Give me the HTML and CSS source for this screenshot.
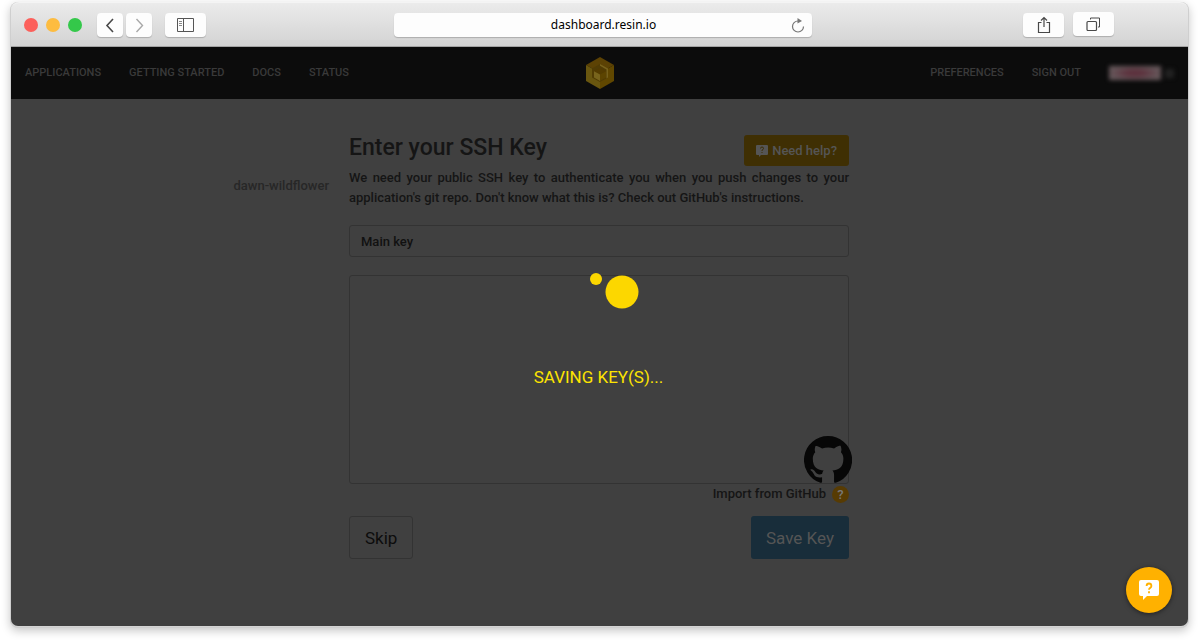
FILE: index.html
```
<!DOCTYPE html>
<html lang="en">
<head>
<meta charset="utf-8">
<title>dashboard.resin.io</title>
<link rel="stylesheet" href="styles.css">
</head>
<body>
<div class="window">
  <div class="toolbar">
    <div class="toolbar-left">
      <div class="lights"><span class="light red"></span><span class="light amber"></span><span class="light green"></span></div>
      <div class="history">
        <button class="tool narrow" aria-label="Back"><svg width="26" height="24" viewBox="0 0 26 24"><path d="M16 6l-6 6.500 6 6.500" fill="none" stroke="#484848" stroke-width="1.600"/></svg></button>
        <button class="tool narrow" aria-label="Forward"><svg width="26" height="24" viewBox="0 0 26 24"><path d="M10.500 6l6 6.500-6 6.500" fill="none" stroke="#a8a8a8" stroke-width="1.400"/></svg></button>
      </div>
      <button class="tool" aria-label="Show sidebar"><svg width="19" height="14" viewBox="0 0 19 14"><path d="M1.500 .5h16v13h-16zM7.500 .5v13" fill="none" stroke="#555"/><path d="M3 3.500h3M3 5.500h3M3 7.500h3" stroke="#888"/></svg></button>
    </div>
    <div class="address">
      <input class="url" type="text" aria-label="Address" value="dashboard.resin.io">
      <button class="reload" aria-label="Reload"><svg width="14" height="15" viewBox="0 0 14 15"><path d="M7 3a5.500 5.500 0 1 0 5.500 5.500" fill="none" stroke="#777" stroke-width="1.200"/><path d="M6.500 0v5.500L11 3z" fill="#777"/></svg></button>
    </div>
    <div class="toolbar-right">
      <button class="tool" aria-label="Share"><svg width="14" height="18" viewBox="0 0 14 18"><path d="M4.500 6.500h-3v10h11v-10h-3M7 11V1.500M4 4.500l3-3 3 3" fill="none" stroke="#484848" stroke-width="1.200"/></svg></button>
      <button class="tool raised" aria-label="Show tabs"><svg width="15" height="15" viewBox="0 0 15 15"><rect x="1" y="4.500" width="9.500" height="9" rx="1" fill="none" stroke="#484848" stroke-width="1.200"/><path d="M4.500 2.500v-1.500h9v9h-1.500" fill="none" stroke="#484848"/></svg></button>
    </div>
  </div>

  <div class="page">
    <header class="site-header">
      <nav class="links left">
        <a href="#">APPLICATIONS</a><a href="#">GETTING STARTED</a><a href="#">DOCS</a><a href="#">STATUS</a>
      </nav>
      <a class="logo" href="#" aria-label="Home"><svg width="30" height="32" viewBox="0 0 30 32">
        <path d="M15 0l14 8-14 8L1 8z" fill="#5c4204"/><path d="M1 8l14 8v16L1 24z" fill="#69560f"/><path d="M29 8l-14 8v16l14-8z" fill="#604700"/>
        <path d="M15 7l8 4.500v9L15 25l-8-4.500v-9z" fill="#513c04"/>
        <path d="M15 7l8 4.500v9l-1.500 .9v-9L15 8.700z" fill="#78621c"/>
        <path d="M15 11l6 3.300-6 3.300-6-3.300z" fill="#543c00"/><path d="M9 14.300l6 3.300v6.400l-6-3.400z" fill="#78641c"/><path d="M21 14.300l-6 3.300v6.400l6-3.400z" fill="#5c4400"/>
      </svg></a>
      <nav class="links right">
        <a href="#">PREFERENCES</a><a href="#">SIGN OUT</a>
        <span class="account"><span class="account-name"></span><span class="account-mark"></span></span>
      </nav>
    </header>

    <div class="content">
      <aside class="app-name">dawn-wildflower</aside>
      <main class="form">
        <div class="title-row">
          <h1>Enter your SSH Key</h1>
          <button class="help"><svg width="12" height="12" viewBox="0 0 12 12"><path d="M1 0h10q1 0 1 1v8q0 1-1 1H5l-2 2v-2H1q-1 0-1-1V1q0-1 1-1z" fill="#555"/><path d="M4.500 3.500q0-1.500 1.500-1.500t1.500 1.400Q7.500 4.500 6 5.200V6M6 7v1" fill="none" stroke="#3d2e06"/></svg>Need help?</button>
        </div>
        <p>We need your public SSH key to authenticate you when you push changes to your application's git repo. Don't know what this is? Check out GitHub's instructions.</p>
        <input class="field" type="text" aria-label="Key title" value="Main key">
        <div class="key-box">
          <textarea class="field area" aria-label="Public key"></textarea>
          <svg class="github" viewBox="0 0 16 16"><path d="M8 0a8 8 0 0 0-2.530 15.590c.4.070.550-.170.550-.380v-1.490c-2.010.370-2.530-.490-2.690-.940-.090-.230-.480-.940-.820-1.130-.280-.150-.680-.520-.010-.530.630-.010 1.080.580 1.230.820.720 1.210 1.870.870 2.330.660.070-.520.280-.870.510-1.070-1.780-.2-3.640-.890-3.640-3.950 0-.870.310-1.590.820-2.150-.080-.2-.360-1.020.080-2.120 0 0 .670-.210 2.200.820a7.400 7.400 0 0 1 4 0c1.530-1.040 2.200-.820 2.200-.820.440 1.100.160 1.920.080 2.120.510.560.820 1.270.820 2.150 0 3.070-1.870 3.750-3.650 3.950.290.250.540.730.540 1.480v2.200c0 .210.150.460.550.380A8 8 0 0 0 8 0z" fill="#070707"/></svg>
        </div>
        <div class="import"><span>Import from GitHub</span><button class="hint" aria-label="About importing">?</button></div>
        <div class="actions"><button class="skip">Skip</button><button class="save">Save Key</button></div>
      </main>
    </div>

    <div class="saving" role="status">
      <svg width="80" height="44" viewBox="0 0 80 44"><circle cx="37" cy="10" r="6" fill="#fcd700"/><circle cx="63" cy="23" r="16.500" fill="#fcd700"/></svg>
      <span>SAVING KEY(S)...</span>
    </div>
    <button class="chat" aria-label="Chat with us"><svg width="22" height="22" viewBox="0 0 22 22"><path d="M3 1h16q2 0 2 2v12q0 2-2 2H9l-4 4v-4H3q-2 0-2-2V3q0-2 2-2z" fill="#fff"/><path d="M8.600 7q0-2.500 2.400-2.500T13.400 7q0 1.200-1.200 1.900T11 10.800M11 12.300v2" fill="none" stroke="#ffb100" stroke-width="1.800"/></svg></button>
  </div>
</div>
</body>
</html>
```
FILE: styles.css
```
* { box-sizing: border-box; }
body {
  margin: 0;
  height: 100vh;
  padding: 2px 10px 16px;
  background: #fff;
  font-family: Roboto, "Liberation Sans", sans-serif;
  font-size: 13px;
  font-weight: 500;
  line-height: 20px;
  overflow: hidden;
}
button, input, textarea { font: inherit; border: 0; margin: 0; padding: 0; }
button { cursor: pointer; }
svg { display: block; flex: none; }
.window {
  height: 100%;
  display: flex;
  flex-direction: column;
  background: #d4d4d4;
  border: 1px solid #cfcfcf;
  border-top: 0;
  border-radius: 8px;
  box-shadow: 0 3px 10px rgba(0, 0, 0, .22);
}
.toolbar {
  height: 45px;
  flex: none;
  display: grid;
  grid-template-columns: minmax(0, 354fr) minmax(0, 418fr) minmax(0, 286fr);
  align-items: center;
  column-gap: 16px;
  padding: 1px 74px 0 13px;
  border-top: 1px solid #f4f4f4;
  border-bottom: 1px solid #a3a3a3;
  border-radius: 8px 8px 0 0;
  background: linear-gradient(#ebebeb, #d3d3d3);
}
.toolbar-left, .toolbar-right, .lights, .history { display: flex; align-items: center; }
.lights { gap: 8px; margin-right: 15px; }
.light { width: 14px; height: 14px; border-radius: 50%; }
.red { background: #fc605b; }
.amber { background: #fdbc40; }
.green { background: #34c84a; }
.history { gap: 3px; margin-right: 13px; }
.toolbar-right { justify-content: flex-end; gap: 9px; }
.tool {
  width: 41px;
  height: 24px;
  display: grid;
  place-items: center;
  border-radius: 4px;
  background: #fdfdfd;
  box-shadow: 0 1px 1px rgba(0, 0, 0, .2);
}
.narrow { width: 26px; }
.raised { margin-bottom: 2px; }
.address {
  display: flex;
  align-items: center;
  height: 24px;
  padding: 0 7px 0 22px;
  border-radius: 4px;
  background: #fdfdfd;
  box-shadow: 0 1px 1px rgba(0, 0, 0, .2);
}
.url {
  flex: 1;
  min-width: 0;
  background: none;
  text-align: center;
  font-family: "Noto Sans", sans-serif;
  font-size: 12px;
  font-weight: 400;
  color: #000;
}
.reload { background: none; }
.page {
  flex: 1;
  position: relative;
  display: flex;
  flex-direction: column;
  margin-bottom: 1px;
  border-radius: 0 0 7px 7px;
  background: #404040;
  color: #151515;
}
.site-header {
  height: 52px;
  display: grid;
  grid-template-columns: 1fr auto 1fr;
  align-items: center;
  padding: 0 14px;
  background: #0c0c0c;
}
.links { display: flex; align-items: center; gap: 28px; font-size: 11px; }
.links a { color: #3a3a3a; text-decoration: none; }
.right { justify-content: flex-end; }
.account { display: flex; align-items: center; gap: 4px; filter: blur(2px); }
.account-name { width: 52px; height: 14px; background: radial-gradient(closest-side, #5c303c 30%, #66585b); }
.account-mark { width: 9px; height: 9px; background: #222; }
.content {
  display: grid;
  grid-template-columns: 1fr 500px 1fr;
  column-gap: 20px;
  padding: 36px 1px 0 0;
}
.app-name { text-align: right; padding-top: 41px; color: #272727; }
.form { display: flex; flex-direction: column; }
.title-row { display: flex; justify-content: space-between; align-items: flex-start; }
h1 { margin: 0; font-size: 23px; line-height: 26px; font-weight: 500; }
.help {
  height: 31px;
  display: flex;
  align-items: center;
  gap: 4px;
  padding: 0 12px;
  border-radius: 3px;
  background: #3f2f03;
  color: #555;
}
p { margin: 2px 0 17px; text-align: justify; }
.field {
  width: 100%;
  height: 32px;
  padding: 0 11px;
  border: 1px solid #333;
  border-radius: 3px;
  background: transparent;
  color: #111;
}
.key-box { position: relative; margin-top: 18px; }
.area { display: block; height: 209px; resize: none; }
.github { position: absolute; right: -3px; bottom: 0; width: 48px; height: 48px; }
.import { display: flex; justify-content: flex-end; align-items: center; gap: 6px; }
.hint { width: 17px; height: 17px; border-radius: 50%; background: #573b03; color: #777; line-height: 17px; }
.actions { display: flex; justify-content: space-between; margin-top: 12px; font-size: 17px; }
.skip, .save { height: 43px; padding: 0 15px; border-radius: 3px; font-weight: 400; }
.skip { border: 1px solid #333; background: transparent; color: #0c0c0c; }
.save { background: #182d3a; color: #555; }
.saving {
  position: absolute;
  inset: 222px 2px auto 0;
  display: flex;
  flex-direction: column;
  align-items: center;
  gap: 54px;
  font-size: 17px;
  font-weight: 400;
  color: #fde400;
}
.chat {
  position: absolute;
  right: 16px;
  bottom: 13px;
  width: 46px;
  height: 46px;
  display: grid;
  place-items: center;
  border-radius: 50%;
  background: #ffb100;
  box-shadow: 0 1px 5px rgba(0, 0, 0, .5);
}
```
